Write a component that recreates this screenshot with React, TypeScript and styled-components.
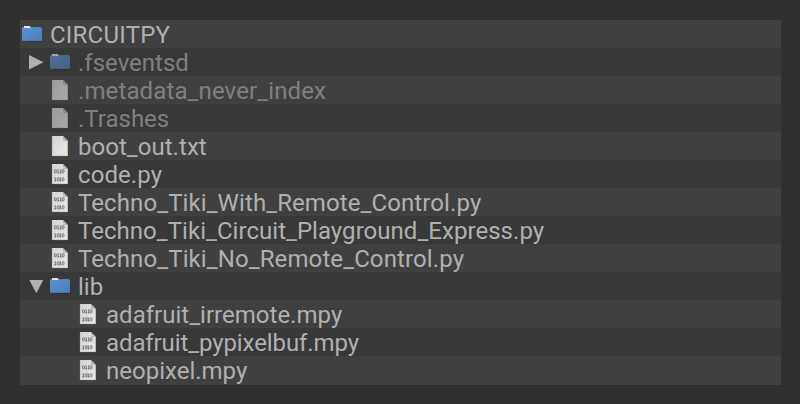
import React from "react";
import styled, { createGlobalStyle } from "styled-components";

const GlobalStyle = createGlobalStyle`
  html, body { margin: 0; background: #303030; }
`;

const Page = styled.main`
  box-sizing: border-box;
  width: 800px;
  height: 404px;
  padding: 20px 19px 19px 20px;
  background: #303030;
`;

const Tree = styled.ul`
  margin: 0;
  padding: 0;
  list-style: none;
`;

const Row = styled.li<{ $depth: number }>`
  box-sizing: border-box;
  display: flex;
  height: 28px;
  padding-left: ${({ $depth }) => ($depth ? ($depth - 1) * 28 : 0)}px;
  background: #383838;
  &:nth-child(odd) { background: #404040; }
  &:last-child { height: 29px; }
`;

const Toggle = styled.span`
  flex: none;
  width: 28px;
  height: 28px;
`;

const IconBox = styled.span<{ $dim?: boolean }>`
  flex: none;
  width: 30px;
  height: 28px;
  opacity: ${({ $dim }) => ($dim ? 0.63 : 1)};
`;

const Name = styled.span<{ $dim?: boolean; $tracking?: number }>`
  color: ${({ $dim }) => ($dim ? "#808080" : "#b0b0b0")};
  font: 400 24px/30px Roboto, sans-serif;
  letter-spacing: ${({ $tracking }) => $tracking ?? 0}px;
  white-space: pre;
`;

const Svg = styled.svg`
  display: block;
`;

const Arrow = ({ open }: { open: boolean }) => (
  <Svg width="28" height="28" viewBox="0 0 28 28">
    <path fill="#b0b0b0" d={open ? "M9.3 8H23.3L16.3 21.3Z" : "M9 6.9L23.5 14.2L9 21.5Z"} />
  </Svg>
);

const Folder = () => (
  <Svg width="30" height="28" viewBox="0 0 30 28">
    <defs>
      <linearGradient id="folder" x1="0" y1="0" x2="1" y2="1">
        <stop offset="0" stopColor="#5c90d2" />
        <stop offset="1" stopColor="#4c7db8" />
      </linearGradient>
    </defs>
    <path fill="#252a30" opacity=".6" d="M7 20H22.6V21.8H7Z" />
    <path fill="#5482bb" d="M2 9.5V8Q2 7 3 7H20.4Q21.4 7 21.4 8V9.5Z" />
    <path fill="#e6e6e2" d="M4 6H9.8L10.8 8H4Z" />
    <rect x="2" y="8" width="20" height="13" rx="1" fill="url(#folder)" />
    <path fill="#416da3" d="M2.5 20.5H21.5V21H2.5Z" />
  </Svg>
);

const Document = ({ binary }: { binary: boolean }) => (
  <Svg width="30" height="28" viewBox="0 0 30 28">
    <defs>
      <linearGradient id="paper" x1="0" y1="0" x2="1" y2="1">
        <stop offset="0" stopColor="#d4d4d4" />
        <stop offset="1" stopColor="#e8e8e8" />
      </linearGradient>
    </defs>
    <path fill="url(#paper)" d="M4 4H15L19.8 8.8V24H4Z" />
    <path fill="#a0a2a0" d="M15 4L19.8 8.8H15Z" />
    <path fill="#d0d0d0" d="M15.2 5.6L17.8 8.2H15.2Z" />
    <path fill="none" stroke="#b4b6b4" strokeWidth=".5" d="M4.3 4V23.7H19.5V9" />
    {binary && (
      <g fill="none" stroke="#484848" strokeWidth=".65">
        <rect x="6.5" y="9.8" width="1.8" height="3" rx=".6" />
        <path d="M10.2 9.5V13M9.4 10H10.2M9.2 13H11.2M12.7 9.5V13M11.9 10H12.7M11.7 13H13.7" />
        <rect x="14.2" y="9.8" width="1.8" height="3" rx=".6" />
        <path d="M7.3 17.5V21M6.4 18H7.3M6.2 21H8.4M12.4 17.5V21M11.6 18H12.4M11.4 21H13.4" />
        <rect x="9.2" y="17.8" width="1.8" height="3" rx=".6" />
        <rect x="14.2" y="17.8" width="1.8" height="3" rx=".6" />
      </g>
    )}
  </Svg>
);

type Entry = {
  name: string;
  kind: "folder" | "plain" | "binary";
  depth: number;
  dim?: boolean;
  open?: boolean;
  tracking?: number;
};

const entries: Entry[] = [
  { name: "CIRCUITPY", kind: "folder", depth: 0, tracking: 0.22 },
  { name: ".fseventsd", kind: "folder", depth: 1, dim: true, open: false },
  { name: ".metadata_never_index", kind: "plain", depth: 1, dim: true, tracking: 0.12 },
  { name: ".Trashes", kind: "plain", depth: 1, dim: true },
  { name: "boot_out.txt", kind: "plain", depth: 1, tracking: 0.04 },
  { name: "code.py", kind: "binary", depth: 1, tracking: 0.08 },
  { name: "Techno_Tiki_With_Remote_Control.py", kind: "binary", depth: 1, tracking: 0.1 },
  { name: "Techno_Tiki_Circuit_Playground_Express.py", kind: "binary", depth: 1, tracking: 0.04 },
  { name: "Techno_Tiki_No_Remote_Control.py", kind: "binary", depth: 1, tracking: 0.11 },
  { name: "lib", kind: "folder", depth: 1, open: true },
  { name: "adafruit_irremote.mpy", kind: "binary", depth: 2, tracking: 0.02 },
  { name: "adafruit_pypixelbuf.mpy", kind: "binary", depth: 2, tracking: -0.1 },
  { name: "neopixel.mpy", kind: "binary", depth: 2 },
];

export default function App() {
  return (
    <>
      <GlobalStyle />
      <Page>
        <Tree>
          {entries.map(({ name, kind, depth, dim, open, tracking }) => (
            <Row key={name} $depth={depth}>
              {depth > 0 && <Toggle>{open !== undefined && <Arrow open={open} />}</Toggle>}
              <IconBox $dim={dim}>
                {kind === "folder" ? <Folder /> : <Document binary={kind === "binary"} />}
              </IconBox>
              <Name $dim={dim} $tracking={tracking}>{name}</Name>
            </Row>
          ))}
        </Tree>
      </Page>
    </>
  );
}
